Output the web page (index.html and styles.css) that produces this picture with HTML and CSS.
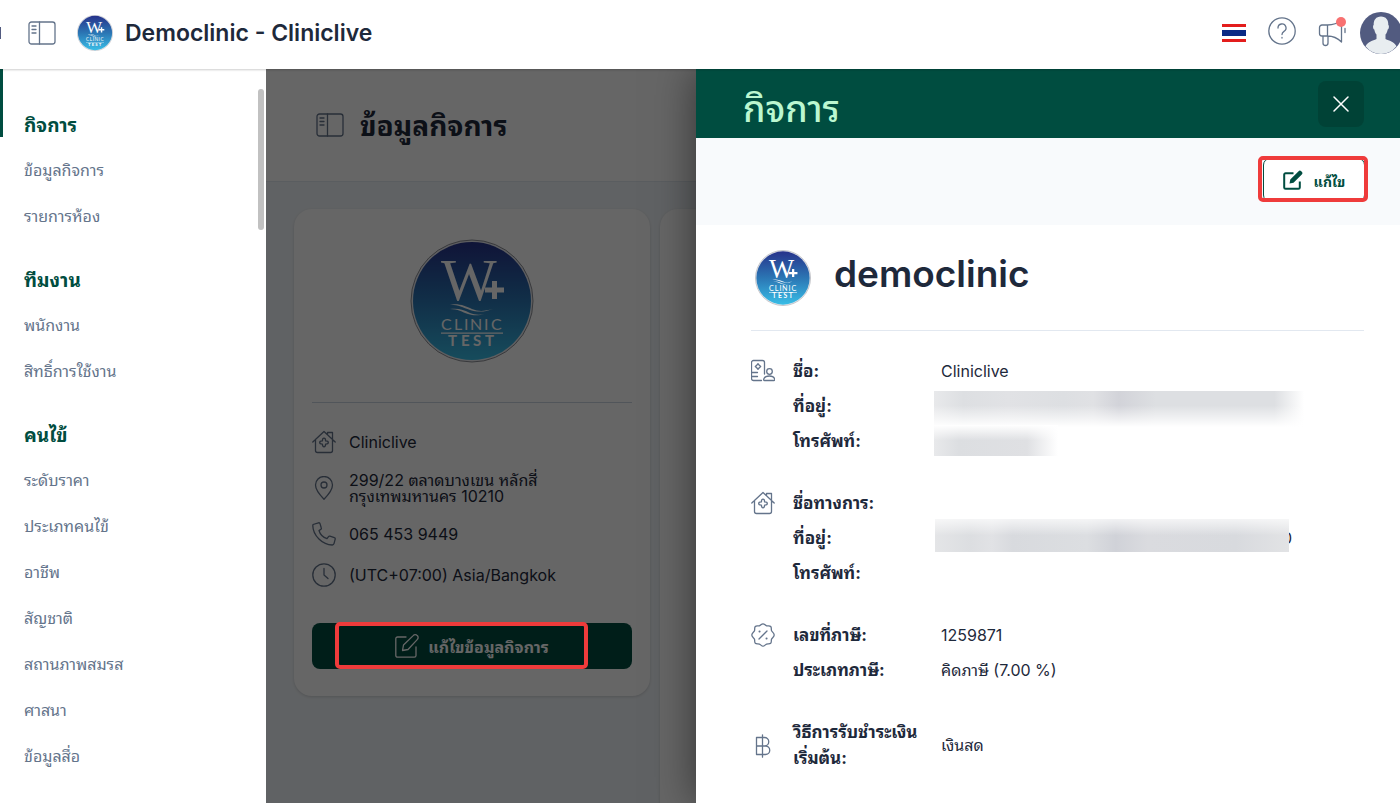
FILE: index.html
```html
<!DOCTYPE html>
<html lang="th">
<head>
<meta charset="utf-8">
<title>Democlinic - Cliniclive</title>
<link rel="stylesheet" href="styles.css">
</head>
<body>

<!-- shared icons -->
<svg class="defs" aria-hidden="true">
	<defs>
		<linearGradient id="logo-fill" x1="0" y1="0" x2="0" y2="1">
			<stop offset="0" stop-color="#27338b"/>
			<stop offset="0.5" stop-color="#2b76b4"/>
			<stop offset="1" stop-color="#39bde6"/>
		</linearGradient>
	</defs>
	<symbol id="logo" viewBox="0 0 124 124">
		<circle cx="62" cy="62" r="61" fill="#e8eaf0" stroke="#8d8f96" stroke-width="1"/>
		<circle cx="62" cy="62" r="59" fill="url(#logo-fill)"/>
		<g fill="#fff">
			<text x="31" y="61" font-family="Liberation Serif, serif" font-size="59">W</text>
			<path d="M82 42h5v6.500h7v5h-7V60h-5v-6.500h-7v-5h7z"/>
			<path d="M38 66c11-2 17 1 24 4s13 2 21 0c-8 3-15 3.500-23 1s-13-6-22-5z"/>
			<path d="M40 70c9-1 14 1 20 4 5 2 10 2 15 1-6 1.500-11 2-17 0s-10-5-18-5z"/>
			<text x="31 44 54 60 74 81" y="91" font-family="Lato, sans-serif" font-size="16">CLINIC</text>
			<path d="M31 93.500h62v1.200H31z"/>
			<text x="38 51 63 75" y="107" font-family="Lato, sans-serif" font-size="15" font-weight="700">TEST</text>
		</g>
	</symbol>
	<symbol id="i-panel" viewBox="0 0 28 24">
		<rect x="1" y="1" width="26" height="22" rx="2.500"/>
		<path d="M11.500 1v22M4 5h4M4 8.500h4M4 12h4"/>
	</symbol>
	<symbol id="i-house" viewBox="0 0 24 24">
		<path d="M.8 12 12 1.500 23.200 12M3.500 9.500V20.500a2 2 0 0 0 2 2h13a2 2 0 0 0 2-2V9.500M15.500 4.800V2.500h5v7"/>
		<path d="M12 8.200c1.500 0 1.600.8 1.600 2.700 1.900 0 2.700.1 2.700 1.600s-.8 1.600-2.700 1.600c0 1.900-.1 2.700-1.600 2.700s-1.600-.8-1.600-2.700c-1.900 0-2.700-.1-2.700-1.600s.8-1.600 2.700-1.600c0-1.900.1-2.700 1.600-2.700z"/>
	</symbol>
	<symbol id="i-pin" viewBox="0 0 24 24">
		<path d="M12 23.200S3.500 14.500 3.500 9a8.500 8.500 0 0 1 17 0c0 5.500-8.500 14.200-8.500 14.200z"/>
		<circle cx="12" cy="9" r="3"/>
	</symbol>
	<symbol id="i-phone" viewBox="0 0 24 24">
		<path d="M1 2.500 6.500.8a1.200 1.200 0 0 1 1.500.8L9.300 6a1.200 1.200 0 0 1-.5 1.400L7 8.500c1 3.500 4.500 7 8 8.200l1.500-2a1.200 1.200 0 0 1 1.400-.5l4.500 1.500a1.200 1.200 0 0 1 .8 1.500l-1.200 4.500a1.800 1.800 0 0 1-1.700 1.300C10.500 23 1 13.500.8 3.800z"/>
	</symbol>
	<symbol id="i-clock" viewBox="0 0 24 24">
		<circle cx="12" cy="12" r="11.200"/>
		<path d="M12 5.500V12l4 3.500"/>
	</symbol>
	<symbol id="i-edit" viewBox="0 0 24 24">
		<path d="M11 3H2.500A1.700 1.700 0 0 0 .8 4.700v16.800a1.700 1.700 0 0 0 1.700 1.700h16.800a1.700 1.700 0 0 0 1.700-1.700V13"/>
		<path d="m13 15.500-5.500 1 1-5.500L18.200 1.600a2.600 2.600 0 0 1 4 0 2.600 2.600 0 0 1 0 4z"/>
	</symbol>
	<symbol id="i-idcard" viewBox="0 0 24 24">
		<path d="M10.500 21.500h-8a2 2 0 0 1-2-2v-16a2 2 0 0 1 2-2h9a2 2 0 0 1 2 2V15M.5 13.500h6M.5 17.500h6"/>
		<path d="M7 4.800 8.300 6.200 9.700 7.500 8.300 8.800 7 10.200 5.700 8.800 4.300 7.500 5.700 6.200z"/>
		<circle cx="18.500" cy="12.500" r="2.800"/>
		<path d="M13.500 21.500c-1 0-1-1-.5-2 1-2 3-2.500 5.500-2.500s4 .5 5 2.500c.5 1 .3 2-.5 2z"/>
	</symbol>
	<symbol id="i-percent" viewBox="0 0 24 24">
		<path d="M12 .8c1.500 0 2.200 1.600 3.600 2s3-.4 4.100.7.300 2.700.8 4.100 2.700 2.400 2.700 4.400-2.200 2.800-2.700 4.200.3 3-.8 4.100-2.700.3-4.100.8-2.100 2.100-3.600 2.100-2.200-1.600-3.600-2.100-3 .3-4.100-.8-.3-2.700-.8-4.100S.8 14 .8 12s2.200-2.900 2.700-4.300-.3-3.100.8-4.200 2.700-.2 4.100-.7S10.500.8 12 .8zM8 16l8-8"/>
		<path d="M8.500 8.500h.1M15.500 15.500h.1" stroke-width="2"/>
	</symbol>
	<symbol id="i-baht" viewBox="0 0 24 24">
		<path d="M5.500 3.500h8a4 4 0 0 1 0 8.500h-8zM5.500 12h9a4.200 4.200 0 0 1 0 8.500h-9zM11.500.8v22.400"/>
	</symbol>
</svg>

<header class="topbar">
	<span class="sliver"></span>
	<button class="icon-btn" aria-label="เมนู"><svg class="ico ico-panel"><use href="#i-panel"/></svg></button>
	<svg class="brand-logo"><use href="#logo"/></svg>
	<h1 class="brand">Democlinic - Cliniclive</h1>
	<div class="tools">
		<button class="icon-btn" aria-label="ภาษาไทย">
			<svg class="flag" viewBox="0 0 24 18"><path fill="#e31d1c" d="M0 0h24v18H0z"/><path fill="#fff" d="M0 3h24v12H0z"/><path fill="#0a2a85" d="M0 6h24v6H0z"/></svg>
		</button>
		<button class="icon-btn help" aria-label="ช่วยเหลือ">
			<svg class="ico ico-help" viewBox="0 0 28 28"><circle cx="14" cy="14" r="13.200"/><path d="M10 11a4 4 0 1 1 6 3.400c-1.300.8-2 1.400-2 3.100M14 20.500v.6"/></svg>
		</button>
		<button class="icon-btn bell" aria-label="ประกาศ">
			<svg class="ico ico-help" viewBox="0 0 28 28"><path d="M9.500 6H4a2.500 2.500 0 0 0-2.500 2.500v6A2.500 2.500 0 0 0 4 17h5.500zM9.500 6c5 0 10-1.500 14-5v22c-4-4-9-6-14-6M5 17v7a2.500 2.500 0 0 0 5 0v-7M27 9.500v4"/></svg>
			<span class="dot"></span>
		</button>
		<button class="icon-btn" aria-label="บัญชีผู้ใช้">
			<svg class="avatar" viewBox="0 0 42 42"><circle cx="21" cy="21" r="21" fill="#525b80"/><path fill="#e8edf0" d="M21 4.500c5 0 7.500 3.500 7.300 8.500 1 .3.800 4-.6 4.500-.5 2.500-1.200 4-2.200 5v4.500c4 2 8 2.300 11 7.200A21 21 0 0 1 21 42 21 21 0 0 1 5.500 34.200c3-4.900 7-5.200 11-7.200v-4.500c-1-1-1.700-2.500-2.200-5-1.400-.5-1.600-4.200-.6-4.500-.2-5 2.300-8.500 7.300-8.500z"/></svg>
		</button>
	</div>
</header>

<div class="shell">
	<div class="rail"><span class="rail-active"></span></div>

	<nav class="sidebar">
		<section>
			<h2>กิจการ</h2>
			<a href="#">ข้อมูลกิจการ</a>
			<a href="#">รายการห้อง</a>
		</section>
		<section>
			<h2>ทีมงาน</h2>
			<a href="#">พนักงาน</a>
			<a href="#">สิทธิ์การใช้งาน</a>
		</section>
		<section>
			<h2>คนไข้</h2>
			<a href="#">ระดับราคา</a>
			<a href="#">ประเภทคนไข้</a>
			<a href="#">อาชีพ</a>
			<a href="#">สัญชาติ</a>
			<a href="#">สถานภาพสมรส</a>
			<a href="#">ศาสนา</a>
			<a href="#">ข้อมูลสื่อ</a>
		</section>
		<span class="thumb"></span>
	</nav>

	<main class="page">
		<div class="page-head">
			<svg class="ico ico-panel"><use href="#i-panel"/></svg>
			<h2>ข้อมูลกิจการ</h2>
		</div>
		<div class="cards">
			<article class="card profile">
				<svg class="profile-logo"><use href="#logo"/></svg>
				<ul class="facts">
					<li><svg class="ico"><use href="#i-house"/></svg><span>Cliniclive</span></li>
					<li class="tall"><svg class="ico"><use href="#i-pin"/></svg><span>299/22 ตลาดบางเขน หลักสี่<br>กรุงเทพมหานคร 10210</span></li>
					<li><svg class="ico"><use href="#i-phone"/></svg><span>065 453 9449</span></li>
					<li><svg class="ico"><use href="#i-clock"/></svg><span>(UTC+07:00) Asia/Bangkok</span></li>
				</ul>
				<button class="btn-main">
					<svg class="ico"><use href="#i-edit"/></svg>แก้ไขข้อมูลกิจการ
					<span class="mark mark-main"></span>
				</button>
			</article>
			<article class="card rest"></article>
		</div>
		<div class="overlay"></div>
	</main>

	<aside class="drawer">
		<div class="drawer-head">
			<h2>กิจการ</h2>
			<button class="close" aria-label="ปิด"><svg viewBox="0 0 16 16"><path d="M1 1l14 14M15 1 1 15"/></svg></button>
		</div>
		<div class="drawer-tools">
			<button class="btn-edit">
				<svg viewBox="0 0 20 20"><path d="M10.500 3.200H2.600A1.400 1.400 0 0 0 1.200 4.600v12.800a1.400 1.400 0 0 0 1.400 1.400h12.800a1.400 1.400 0 0 0 1.400-1.400v-6" fill="none" stroke="currentColor" stroke-width="2"/><path fill="currentColor" d="m6.500 13.500.8-4L15.600 1.200a1.800 1.800 0 0 1 2.600 0l.6.600a1.800 1.800 0 0 1 0 2.600l-8.300 8.300z"/></svg>
				แก้ไข
				<span class="mark mark-edit"></span>
			</button>
		</div>
		<div class="drawer-body">
			<div class="who">
				<svg class="who-logo"><use href="#logo"/></svg>
				<h3>democlinic</h3>
			</div>
			<div class="info">
				<svg class="ico"><use href="#i-idcard"/></svg>
				<dl>
					<dt>ชื่อ:</dt><dd>Cliniclive</dd>
					<dt>ที่อยู่:</dt><dd><span class="smudge smudge-top"></span></dd>
					<dt>โทรศัพท์:</dt><dd><span class="smudge smudge-phone"></span></dd>
				</dl>
			</div>
			<div class="info">
				<svg class="ico"><use href="#i-house"/></svg>
				<dl>
					<dt>ชื่อทางการ:</dt><dd></dd>
					<dt>ที่อยู่:</dt><dd class="tail"><span class="smudge smudge-box"></span>0</dd>
					<dt>โทรศัพท์:</dt><dd></dd>
				</dl>
			</div>
			<div class="info">
				<svg class="ico"><use href="#i-percent"/></svg>
				<dl>
					<dt>เลขที่ภาษี:</dt><dd>1259871</dd>
					<dt>ประเภทภาษี:</dt><dd>คิดภาษี (7.00 %)</dd>
				</dl>
			</div>
			<div class="info middle">
				<svg class="ico"><use href="#i-baht"/></svg>
				<dl>
					<dt>วิธีการรับชำระเงิน<br>เริ่มต้น:</dt><dd>เงินสด</dd>
				</dl>
			</div>
		</div>
	</aside>
</div>

</body>
</html>
```

FILE: styles.css
```css
* {
	box-sizing: border-box;
}
html {
	height: 100%;
	overflow: hidden;
}
body {
	margin: 0;
	height: 100%;
	display: flex;
	flex-direction: column;
	overflow: hidden;
	background: #fff;
	color: #1e293b;
	font-family: Inter, "Noto Sans Thai Looped", Loma, Waree, "Noto Sans Thai", "Noto Sans", sans-serif;
	font-size: 16px;
}
h1, h2, h3, ul, dl, dd {
	margin: 0;
	padding: 0;
}
button {
	font: inherit;
	cursor: pointer;
}
a {
	text-decoration: none;
}
.defs {
	position: absolute;
	width: 0;
	height: 0;
	overflow: visible;
}
.ico {
	width: 24px;
	height: 24px;
	flex: none;
	fill: none;
	stroke: #64748b;
	stroke-width: 1.3;
	stroke-linecap: round;
	stroke-linejoin: round;
}
.ico-panel {
	width: 28px;
}
.ico-help {
	width: 28px;
	height: 28px;
}

/* top bar */
.topbar {
	display: flex;
	align-items: center;
	flex: none;
	height: 69px;
	padding-bottom: 3px;
	position: relative;
	z-index: 30;
	background: #fff;
	box-shadow: 0 1px 2px rgba(0,0,0,.2);
}
.sliver {
	width: 1px;
	height: 12px;
	margin-right: 27px;
	background: #525b80;
}
.icon-btn {
	display: flex;
	padding: 0;
	border: 0;
	background: none;
}
.brand-logo {
	width: 36px;
	height: 36px;
	margin: 0 12px 0 21px;
}
.brand {
	font-size: 23px;
	font-weight: 600;
}
.tools {
	display: flex;
	align-items: center;
	gap: 22px;
	margin-left: auto;
}
.flag {
	width: 24px;
	height: 18px;
}
.help {
	padding-bottom: 5px;
}
.bell {
	position: relative;
}
.dot {
	position: absolute;
	top: -2px;
	right: 0;
	width: 10px;
	height: 10px;
	border-radius: 50%;
	background: #f87171;
}
.avatar {
	width: 42px;
	height: 42px;
	margin: 0 -2px 0 -8px;
}

/* layout under the bar */
.shell {
	display: flex;
	flex: 1;
	min-height: 0;
	position: relative;
}
.rail {
	width: 3px;
	flex: none;
	background: #fff;
}
.rail-active {
	display: block;
	height: 68px;
	background: #004d40;
}
.sidebar {
	position: relative;
	flex: none;
	width: 263px;
	padding: 36px 21px 0;
	background: #fff;
	overflow: hidden;
}
.sidebar section {
	margin-bottom: 21px;
}
.sidebar h2 {
	font-size: 19px;
	line-height: 42px;
	color: #004d40;
}
.sidebar a {
	display: block;
	line-height: 46px;
	color: #64748b;
}
.thumb {
	position: absolute;
	top: 20px;
	right: 2px;
	width: 6px;
	height: 141px;
	border-radius: 3px;
	background: #c1c1c1;
}

/* page behind the drawer */
.page {
	position: relative;
	flex: 1;
	min-width: 0;
	background: #f1f5f9;
	overflow: hidden;
}
.page-head {
	display: flex;
	align-items: center;
	gap: 16px;
	height: 113px;
	padding: 0 50px;
	border-bottom: 1px solid #e2e8f0;
	background: #fff;
}
.page-head h2 {
	padding-bottom: 4px;
	font-size: 28px;
}
.cards {
	display: flex;
	align-items: flex-start;
	gap: 10px;
	padding: 27px 28px;
}
.card {
	border-radius: 18px;
	background: #fff;
	box-shadow: 0 1px 3px rgba(0,0,0,.15);
}
.profile {
	flex: none;
	width: 356px;
	padding: 30px 18px 27px;
}
.rest {
	flex: 1;
	height: 700px;
}
.profile-logo {
	display: block;
	width: 124px;
	height: 124px;
	margin: 0 auto 39px;
}
.facts {
	display: flex;
	flex-direction: column;
	gap: 17px;
	padding: 27px 0 36px;
	border-top: 1px solid #cbd5e1;
	list-style: none;
}
.facts li {
	display: flex;
	align-items: center;
	gap: 13px;
	height: 24px;
	line-height: 16px;
}
.facts .tall {
	height: 34px;
}
.btn-main {
	position: relative;
	display: flex;
	align-items: center;
	justify-content: center;
	gap: 9px;
	width: 100%;
	height: 46px;
	border: 0;
	border-radius: 8px;
	background: #004d40;
	color: #fff;
	font-weight: 700;
}
.btn-main .ico {
	stroke: #fff;
}
.overlay {
	position: absolute;
	top: 0;
	right: 0;
	bottom: 0;
	left: 0;
	z-index: 10;
	background: rgba(0,0,0,.6);
}
.mark {
	position: absolute;
	z-index: 15;
	border: 4px solid #ef3b3b;
	border-radius: 5px;
}
.mark-main {
	top: -1px;
	bottom: 0;
	left: 23px;
	right: 44px;
}
.mark-edit {
	top: -3px;
	right: -4px;
	bottom: -1px;
	left: -6px;
}

/* drawer */
.drawer {
	position: absolute;
	top: 0;
	right: 0;
	bottom: 0;
	z-index: 20;
	width: 704px;
	max-width: 100%;
	background: #fff;
	box-shadow: 0 0 40px rgba(0,0,0,.5);
	overflow: hidden;
}
.drawer-head {
	display: flex;
	align-items: center;
	justify-content: space-between;
	height: 69px;
	padding: 0 36px 0 47px;
	background: #004d40;
}
.drawer-head h2 {
	padding-top: 4px;
	font-size: 36px;
	font-weight: 500;
	color: #bbf7d0;
}
.close {
	display: flex;
	align-items: center;
	justify-content: center;
	width: 46px;
	height: 46px;
	padding: 0;
	border: 0;
	border-radius: 8px;
	background: #004236;
}
.close svg {
	width: 16px;
	height: 16px;
	fill: none;
	stroke: #fff;
	stroke-width: 1.5;
	stroke-linecap: round;
}
.drawer-tools {
	display: flex;
	align-items: center;
	justify-content: flex-end;
	height: 87px;
	padding: 0 35px 3px;
	background: #f8fafc;
}
.btn-edit {
	position: relative;
	display: flex;
	align-items: center;
	justify-content: center;
	gap: 11px;
	width: 102px;
	height: 44px;
	padding: 0;
	border: 1px solid #004d40;
	border-radius: 7px;
	background: #fff;
	color: #004d40;
	font-size: 14px;
	font-weight: 700;
}
.btn-edit svg {
	width: 20px;
	height: 20px;
}
.drawer-body {
	padding: 0 36px 0 55px;
}
.who {
	display: flex;
	align-items: center;
	gap: 23px;
	height: 106px;
	padding: 0 4px;
	border-bottom: 1px solid #e2e8f0;
}
.who-logo {
	width: 56px;
	height: 56px;
}
.who h3 {
	padding-bottom: 9px;
	font-size: 37px;
	font-weight: 600;
}
.info {
	display: flex;
	gap: 18px;
	margin: 27px 0 36px;
}
.info + .info {
	margin-top: 0;
}
.info .ico {
	margin-top: 1px;
}
.middle {
	align-items: center;
}
.info dl {
	display: grid;
	grid-template-columns: 148px 1fr;
	align-items: center;
	row-gap: 9px;
	flex: 1;
}
.info dt, .info dd {
	min-height: 26px;
	line-height: 26px;
}
.info dt {
	font-size: 17px;
	font-weight: 700;
	white-space: nowrap;
}
.info dd {
	position: relative;
}

/* blurred private data */
.smudge {
	position: absolute;
	left: -7px;
}
.smudge-top {
	top: -2px;
	width: 370px;
	height: 36px;
	background:
		linear-gradient(rgba(255,255,255,0) 40%, #fff),
		linear-gradient(90deg, #e8e9eb, #dddfe2 8%, #e1e2e5 20%, #dddfe2 35%, #e0e1e4 43%, #d2d3d9 50%, #dddfe2 60%, #dddfe2 92%, #fff);
}
.smudge-phone {
	top: -3px;
	width: 124px;
	height: 31px;
	background:
		linear-gradient(#fff, rgba(255,255,255,0) 50%),
		linear-gradient(90deg, #e8e9eb, #dcdee1 20%, #dfe0e3 75%, #fff);
}
.tail {
	display: flex;
}
.smudge-box {
	position: relative;
	left: 0;
	z-index: 1;
	flex: none;
	width: 354px;
	height: 33px;
	margin: -6px -7px -6px -6px;
	background:
		linear-gradient(rgba(255,255,255,.7), rgba(255,255,255,0) 50%),
		linear-gradient(90deg, #e4e5e7, #dcdee1 10%, #e1e2e5 16%, #d8dade 22%, #dcdee1 43%, #d0d2d8 51%, #dadbdf 60%, #d8dade 85%, #e2e3e5);
}
```
